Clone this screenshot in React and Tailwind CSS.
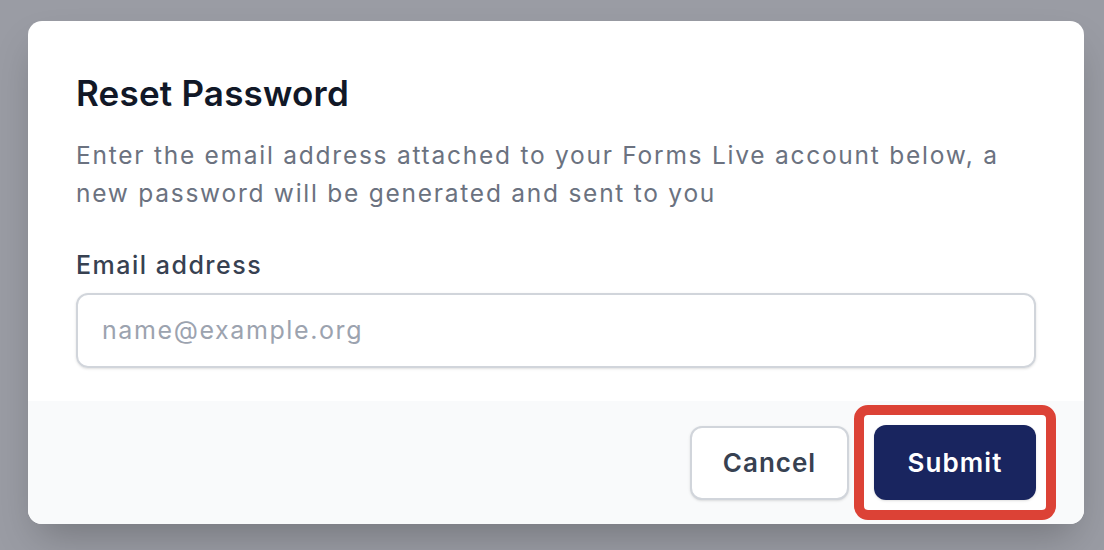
import React from "react";

export default function App() {
  return (
    <div className="min-h-[550px] w-full bg-[#9a9ca4] pt-[21px] pl-[28px] font-['Inter',sans-serif]">
      <div className="w-[1056px] h-[503px] rounded-[14px] bg-white overflow-hidden shadow-[0_20px_40px_-10px_rgba(0,0,0,0.25)] flex flex-col">
        <div className="flex-1 px-[48px] pt-[51px]">
          <h2 className="text-[35px] leading-[42px] font-semibold text-[#111827] tracking-[0.2px]">
            Reset Password
          </h2>
          <p className="mt-[22px] text-[24.5px] leading-[38px] text-[#6b7280] tracking-[1.75px]">
            Enter the email address attached to your Forms Live account below, a new password will be generated and sent to you
          </p>
          <label className="block mt-[35px] text-[25px] leading-[36px] font-medium text-[#374151] tracking-[1.5px]">
            Email address
          </label>
          <div className="mt-[10px] h-[75px] rounded-[12px] border-2 border-[#d1d5db] flex items-center pl-[24px] shadow-sm">
            <span className="text-[25px] text-[#9ca3af] tracking-[1.6px]">name@example.org</span>
          </div>
        </div>
        <div className="h-[123px] bg-[#f9fafb] flex items-center justify-end gap-[25px] pr-[48px]">
          <button className="w-[159px] h-[74px] rounded-[12px] bg-white border-2 border-[#d1d5db] shadow-sm text-[26px] font-semibold text-[#374151] tracking-[1px]">
            Cancel
          </button>
          <div className="relative">
            <span className="absolute -inset-[20px] rounded-[14px] border-[10px] border-[#dc4236] bg-white"></span>
            <button className="relative w-[162px] h-[75px] rounded-[12px] bg-[#19255f] text-[26px] font-semibold text-white shadow-sm tracking-[1.1px]">
              Submit
            </button>
          </div>
        </div>
      </div>
    </div>
  );
}
